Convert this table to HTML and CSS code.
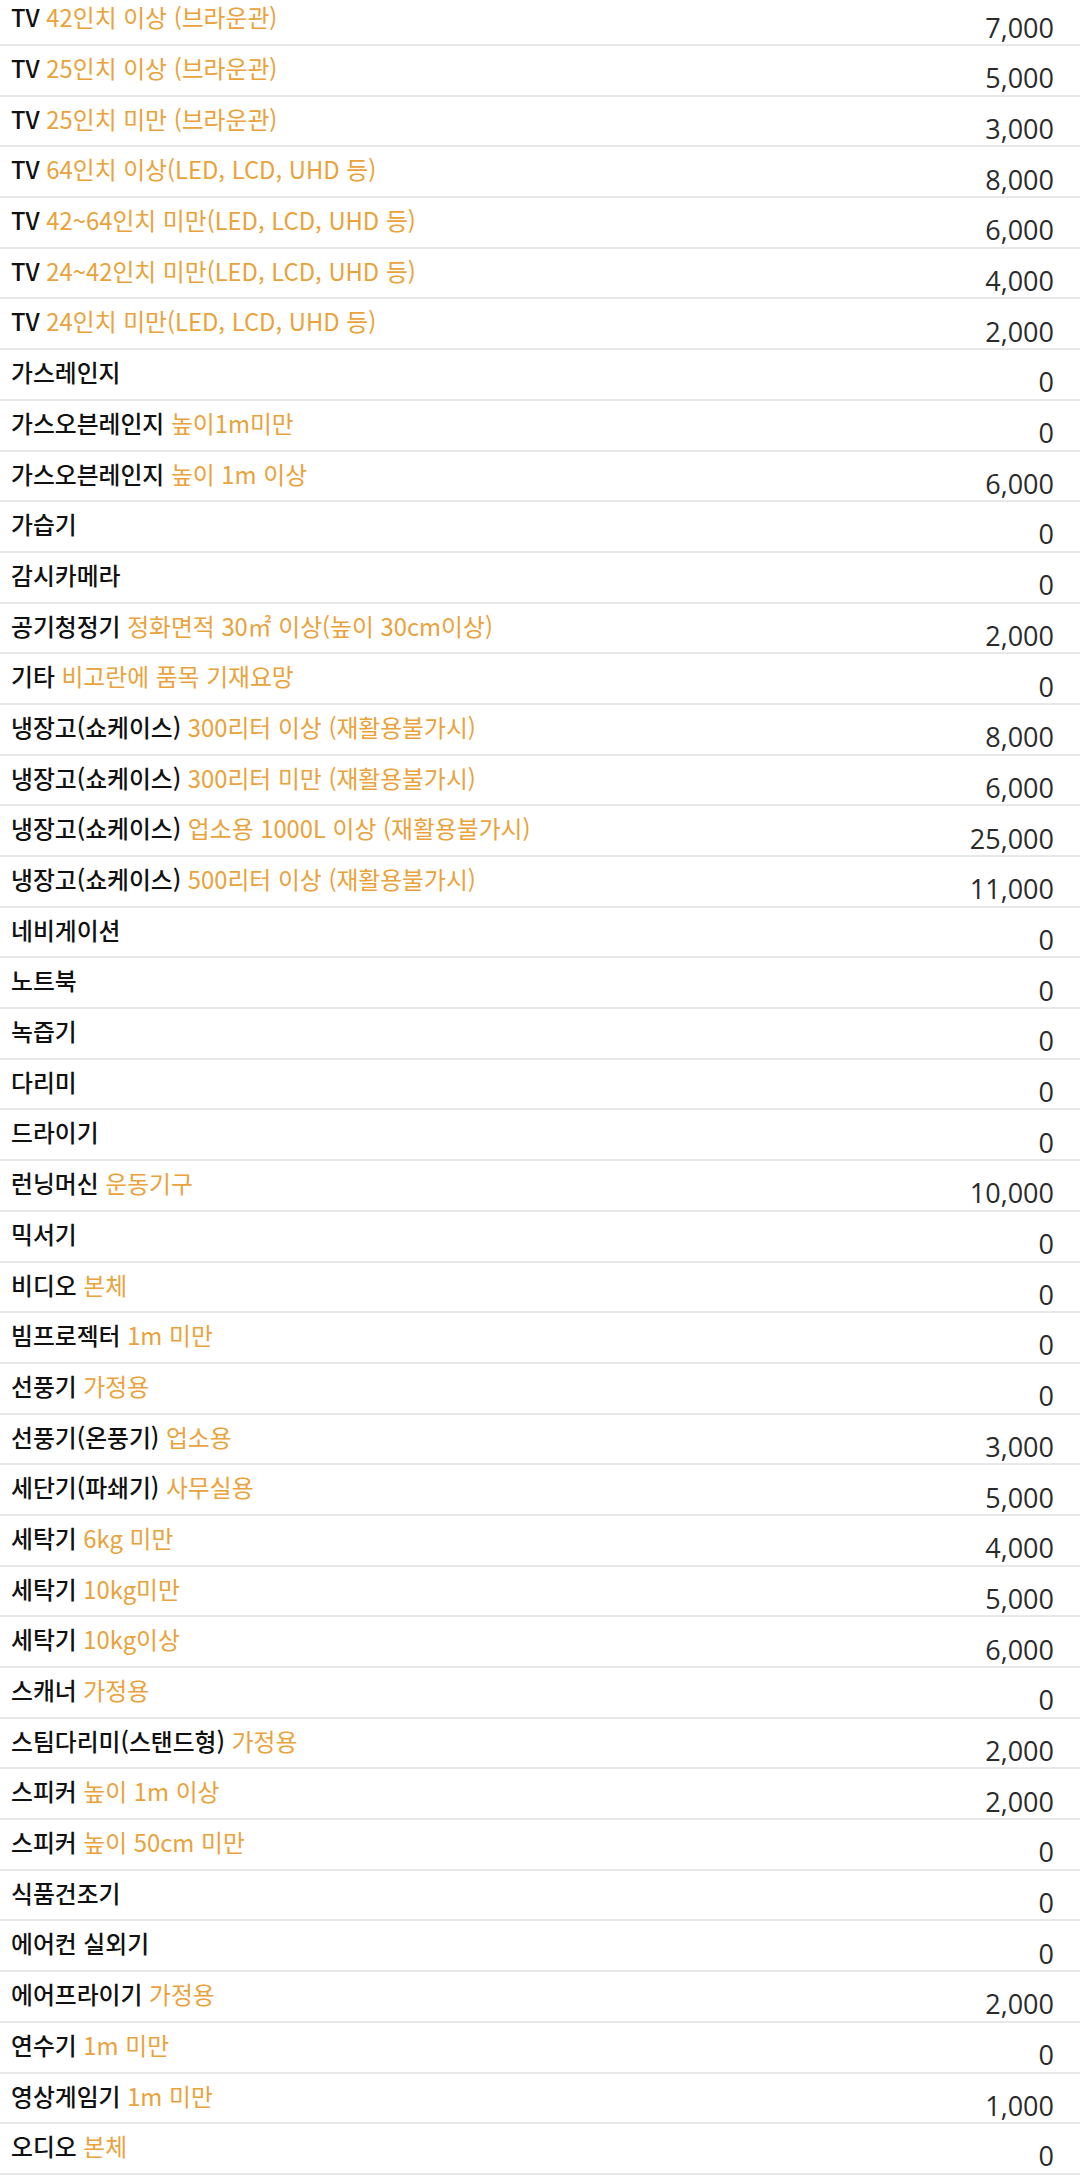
FILE: index.html
```html
<!DOCTYPE html>
<html lang="ko">
<head>
    <meta charset="UTF-8">
    <meta name="viewport" content="width=device-width, initial-scale=1.0">
    <title>품목 요금표</title>
    <link rel="stylesheet" href="styles.css">
</head>
<body>
    <ul class="lista">
        <li class="fila"><span class="nombre">TV <em>42인치 이상 (브라운관)</em></span><span class="precio">7,000</span></li>
        <li class="fila"><span class="nombre">TV <em>25인치 이상 (브라운관)</em></span><span class="precio">5,000</span></li>
        <li class="fila"><span class="nombre">TV <em>25인치 미만 (브라운관)</em></span><span class="precio">3,000</span></li>
        <li class="fila"><span class="nombre">TV <em>64인치 이상(LED, LCD, UHD 등)</em></span><span class="precio">8,000</span></li>
        <li class="fila"><span class="nombre">TV <em>42~64인치 미만(LED, LCD, UHD 등)</em></span><span class="precio">6,000</span></li>
        <li class="fila"><span class="nombre">TV <em>24~42인치 미만(LED, LCD, UHD 등)</em></span><span class="precio">4,000</span></li>
        <li class="fila"><span class="nombre">TV <em>24인치 미만(LED, LCD, UHD 등)</em></span><span class="precio">2,000</span></li>
        <li class="fila"><span class="nombre">가스레인지</span><span class="precio">0</span></li>
        <li class="fila"><span class="nombre">가스오븐레인지 <em>높이1m미만</em></span><span class="precio">0</span></li>
        <li class="fila"><span class="nombre">가스오븐레인지 <em>높이 1m 이상</em></span><span class="precio">6,000</span></li>
        <li class="fila"><span class="nombre">가습기</span><span class="precio">0</span></li>
        <li class="fila"><span class="nombre">감시카메라</span><span class="precio">0</span></li>
        <li class="fila"><span class="nombre">공기청정기 <em>정화면적 30㎡ 이상(높이 30cm이상)</em></span><span class="precio">2,000</span></li>
        <li class="fila"><span class="nombre">기타 <em>비고란에 품목 기재요망</em></span><span class="precio">0</span></li>
        <li class="fila"><span class="nombre">냉장고(쇼케이스) <em>300리터 이상 (재활용불가시)</em></span><span class="precio">8,000</span></li>
        <li class="fila"><span class="nombre">냉장고(쇼케이스) <em>300리터 미만 (재활용불가시)</em></span><span class="precio">6,000</span></li>
        <li class="fila"><span class="nombre">냉장고(쇼케이스) <em>업소용 1000L 이상 (재활용불가시)</em></span><span class="precio">25,000</span></li>
        <li class="fila"><span class="nombre">냉장고(쇼케이스) <em>500리터 이상 (재활용불가시)</em></span><span class="precio">11,000</span></li>
        <li class="fila"><span class="nombre">네비게이션</span><span class="precio">0</span></li>
        <li class="fila"><span class="nombre">노트북</span><span class="precio">0</span></li>
        <li class="fila"><span class="nombre">녹즙기</span><span class="precio">0</span></li>
        <li class="fila"><span class="nombre">다리미</span><span class="precio">0</span></li>
        <li class="fila"><span class="nombre">드라이기</span><span class="precio">0</span></li>
        <li class="fila"><span class="nombre">런닝머신 <em>운동기구</em></span><span class="precio">10,000</span></li>
        <li class="fila"><span class="nombre">믹서기</span><span class="precio">0</span></li>
        <li class="fila"><span class="nombre">비디오 <em>본체</em></span><span class="precio">0</span></li>
        <li class="fila"><span class="nombre">빔프로젝터 <em>1m 미만</em></span><span class="precio">0</span></li>
        <li class="fila"><span class="nombre">선풍기 <em>가정용</em></span><span class="precio">0</span></li>
        <li class="fila"><span class="nombre">선풍기(온풍기) <em>업소용</em></span><span class="precio">3,000</span></li>
        <li class="fila"><span class="nombre">세단기(파쇄기) <em>사무실용</em></span><span class="precio">5,000</span></li>
        <li class="fila"><span class="nombre">세탁기 <em>6kg 미만</em></span><span class="precio">4,000</span></li>
        <li class="fila"><span class="nombre">세탁기 <em>10kg미만</em></span><span class="precio">5,000</span></li>
        <li class="fila"><span class="nombre">세탁기 <em>10kg이상</em></span><span class="precio">6,000</span></li>
        <li class="fila"><span class="nombre">스캐너 <em>가정용</em></span><span class="precio">0</span></li>
        <li class="fila"><span class="nombre">스팀다리미(스탠드형) <em>가정용</em></span><span class="precio">2,000</span></li>
        <li class="fila"><span class="nombre">스피커 <em>높이 1m 이상</em></span><span class="precio">2,000</span></li>
        <li class="fila"><span class="nombre">스피커 <em>높이 50cm 미만</em></span><span class="precio">0</span></li>
        <li class="fila"><span class="nombre">식품건조기</span><span class="precio">0</span></li>
        <li class="fila"><span class="nombre">에어컨 실외기</span><span class="precio">0</span></li>
        <li class="fila"><span class="nombre">에어프라이기 <em>가정용</em></span><span class="precio">2,000</span></li>
        <li class="fila"><span class="nombre">연수기 <em>1m 미만</em></span><span class="precio">0</span></li>
        <li class="fila"><span class="nombre">영상게임기 <em>1m 미만</em></span><span class="precio">1,000</span></li>
        <li class="fila"><span class="nombre">오디오 <em>본체</em></span><span class="precio">0</span></li>
    </ul>
</body>
</html>
```

FILE: styles.css
```css
body {
    margin: 0;
    background-color: #fff;
    font-family: "Noto Sans CJK KR", "Noto Sans", sans-serif;
    overflow: hidden;
}
.lista {
    list-style: none;
    margin: -4.7px 0 0 0; /* la lista está un poco desplazada hacia arriba */
    padding: 0;
}
.fila {
    display: flex;
    justify-content: space-between;
    height: 50.7px;
    box-sizing: border-box;
    padding: 0 26px 0 11px;
    border-bottom: 2px solid #e8e8e8;
}
.nombre {
    align-self: flex-start;
    padding-top: 5px;
    font-size: 23.8px;
    font-weight: 500;
    line-height: 1.45;
    color: #111;
    white-space: nowrap;
}
.nombre em {
    font-style: normal;
    font-weight: 400;
    color: #eaa23a;
}
.precio {
    align-self: flex-end;
    font-family: "Open Sans", sans-serif;
    font-size: 27px;
    line-height: 1.2;
    color: #2b2b2b;
}
```
